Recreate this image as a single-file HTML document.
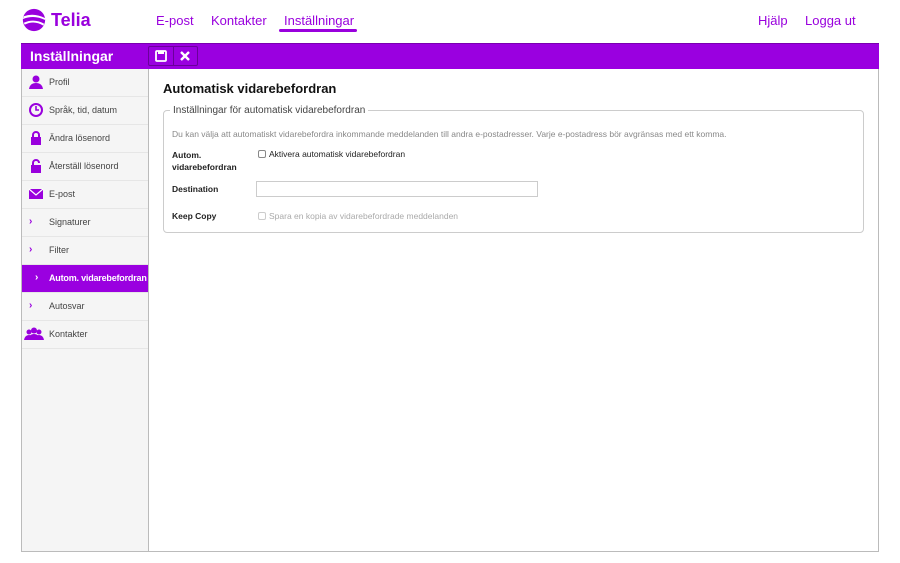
<!DOCTYPE html>
<html><head><meta charset="utf-8"><style>
*{box-sizing:border-box;margin:0;padding:0}
body{width:900px;height:563px;background:#fff;font-family:"Liberation Sans",Arial,sans-serif;position:relative;overflow:hidden}
.nav a{position:absolute;top:13px;font-size:13px;color:#9900dd;text-decoration:none}
.bar{position:absolute;left:21px;top:43px;width:858px;height:26px;background:#9a00e0;border-top:1px solid #7a00b0}
.bar .t{position:absolute;left:9px;top:4px;color:#fff;font-weight:bold;font-size:14px}
.btns{position:absolute;left:127px;top:2px;width:50px;height:20px;border:1px solid #6a009a;border-radius:2px;display:flex}
.btns div{flex:1;display:flex;align-items:center;justify-content:center}
.btns div+div{border-left:1px solid #6a009a}
.side{position:absolute;left:21px;top:69px;width:128px;height:483px;background:#f5f5f5;border-left:1px solid #bbb;border-right:1px solid #bbb;border-bottom:1px solid #bbb}
.main{position:absolute;left:149px;top:69px;width:730px;height:483px;border-right:1px solid #bbb;border-bottom:1px solid #bbb}
.it{height:28px;border-bottom:1px solid #e6e6e6;position:relative;font-size:9px;color:#444;white-space:nowrap}
.it span{position:absolute;left:27px;top:8px}
.it svg{position:absolute;left:6px;top:5px}
.it.sel{background:#9a00e0;color:#fff;font-weight:bold;letter-spacing:-0.2px}
.chev{position:absolute;left:7px;top:7px;color:#9900dd;font-weight:bold;font-size:10px}
h1{position:absolute;left:14px;top:12px;font-size:13px;font-weight:bold;color:#111}
fieldset{position:absolute;left:14px;top:36px;width:701px;height:128px;border:1px solid #ccc;border-radius:4px}
legend{margin-left:6px;padding:0 3px;font-size:10px;color:#444}
.f{position:absolute;font-size:8.5px;white-space:nowrap}
.lab{font-weight:bold;color:#222}
.cb{display:inline-block;width:8px;height:8px;border:1px solid #888;border-radius:2px;vertical-align:-1px;margin-right:3px;background:#fff}
</style></head><body>
<svg style="position:absolute;left:21px;top:7px" width="26" height="26" viewBox="0 0 28 28"><ellipse cx="14" cy="14" rx="12" ry="12" fill="#9900dd"/><path d="M3 10 Q14 6 26 12 L26 14 Q14 8 2 13Z" fill="#fff"/><path d="M3 17 Q14 12 25 18 L24 20 Q14 14 4 19Z" fill="#fff"/></svg>
<div style="position:absolute;left:51px;top:10px;font-size:18px;font-weight:bold;color:#9900dd">Telia</div>
<div class="nav"><a style="left:156px">E-post</a><a style="left:211px">Kontakter</a><a style="left:284px">Inställningar</a><a style="left:758px">Hjälp</a><a style="left:805px">Logga ut</a></div>
<div style="position:absolute;left:279px;top:29px;width:78px;height:3px;background:#9900dd;border-radius:2px"></div>
<div class="bar"><div class="t">Inställningar</div><div class="btns"><div><svg width="12" height="12" viewBox="0 0 12 12"><rect x="1" y="1" width="10" height="10" rx="1" fill="none" stroke="#fff" stroke-width="1.8"/><rect x="3" y="1" width="6" height="3" fill="#fff"/></svg></div><div><svg width="10" height="10" viewBox="0 0 10 10"><path d="M1 1L9 9M9 1L1 9" stroke="#fff" stroke-width="2.4"/></svg></div></div></div>
<div class="side">
<div class="it"><svg width="16" height="16" viewBox="0 0 16 16"><circle cx="8" cy="5" r="3.5" fill="#9900dd"/><path d="M1 15 Q2 9 8 9 Q14 9 15 15Z" fill="#9900dd"/></svg><span>Profil</span></div>
<div class="it"><svg width="16" height="16" viewBox="0 0 16 16"><circle cx="8" cy="8" r="6" fill="none" stroke="#9900dd" stroke-width="2"/><path d="M8 4V8H11" stroke="#9900dd" stroke-width="1.6" fill="none"/></svg><span>Språk, tid, datum</span></div>
<div class="it"><svg width="16" height="16" viewBox="0 0 16 16"><path d="M5 8V5a3 3 0 0 1 6 0v3" stroke="#9900dd" stroke-width="2" fill="none"/><rect x="3" y="7" width="10" height="8" fill="#9900dd"/></svg><span>Ändra lösenord</span></div>
<div class="it"><svg width="16" height="16" viewBox="0 0 16 16"><path d="M5 8V5a3 3 0 0 1 6 0" stroke="#9900dd" stroke-width="2" fill="none"/><rect x="3" y="7" width="10" height="8" fill="#9900dd"/></svg><span>Återställ lösenord</span></div>
<div class="it"><svg width="16" height="16" viewBox="0 0 16 16"><rect x="1" y="3" width="14" height="10" fill="#9900dd"/><path d="M1 3L8 9L15 3" stroke="#fff" stroke-width="1.2" fill="none"/></svg><span>E-post</span></div>
<div class="it"><b class="chev">›</b><span>Signaturer</span></div>
<div class="it"><b class="chev">›</b><span>Filter</span></div>
<div class="it sel"><b class="chev" style="color:#fff;left:13px">›</b><span>Autom. vidarebefordran</span></div>
<div class="it"><b class="chev">›</b><span>Autosvar</span></div>
<div class="it"><svg width="20" height="16" viewBox="0 0 20 16" style="left:2px"><circle cx="5" cy="6" r="2.5" fill="#9900dd"/><circle cx="15" cy="6" r="2.5" fill="#9900dd"/><circle cx="10" cy="4.5" r="3" fill="#9900dd"/><path d="M0 14Q1 9 5 9Q9 9 10 14ZM10 14Q11 9 15 9Q19 9 20 14ZM4 14Q5 8 10 8Q15 8 16 14Z" fill="#9900dd"/></svg><span>Kontakter</span></div>
</div>
<div class="main">
<h1>Automatisk vidarebefordran</h1>
<fieldset><legend>Inställningar för automatisk vidarebefordran</legend></fieldset>
<div class="f" style="left:23px;top:60px;color:#888">Du kan välja att automatiskt vidarebefordra inkommande meddelanden till andra e-postadresser. Varje e-postadress bör avgränsas med ett komma.</div>
<div class="f lab" style="left:23px;top:80px;line-height:12px">Autom.<br>vidarebefordran</div>
<div class="f" style="left:109px;top:80px;color:#222"><i class="cb"></i>Aktivera automatisk vidarebefordran</div>
<div class="f lab" style="left:23px;top:115px">Destination</div>
<div style="position:absolute;left:107px;top:112px;width:282px;height:16px;border:1px solid #ccc"></div>
<div class="f lab" style="left:23px;top:142px">Keep Copy</div>
<div class="f" style="left:109px;top:142px;color:#aaa"><i class="cb" style="border-color:#ccc"></i>Spara en kopia av vidarebefordrade meddelanden</div>
</div>
</body></html>
